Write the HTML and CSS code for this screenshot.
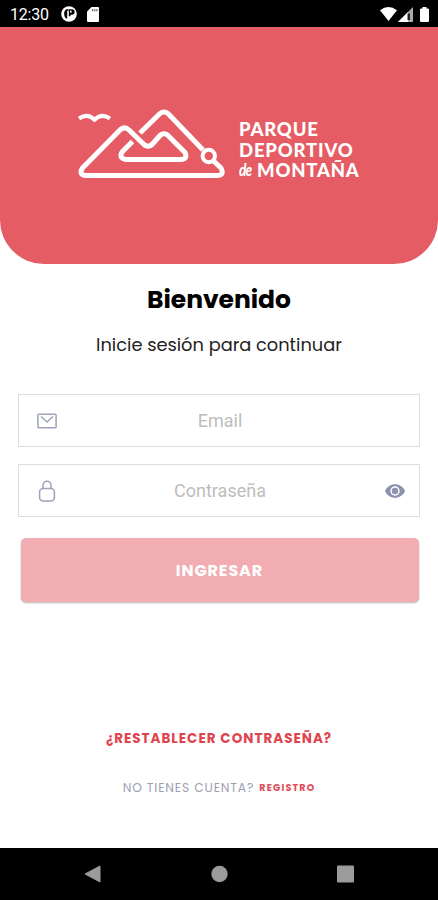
FILE: index.html
```html
<!DOCTYPE html>
<html lang="es">
<head>
    <meta charset="UTF-8">
    <meta name="viewport" content="width=device-width, initial-scale=1.0">
    <title>Parque Deportivo de Montaña</title>
    <link rel="stylesheet" href="styles.css">
</head>
<body>
    <div class="status-bar">
        <span class="clock">12:30</span>
        <svg class="status-app" width="16" height="16" viewBox="0 0 16 16">
            <circle cx="8" cy="8" r="7.8" fill="#fff"/>
            <path d="M7.500 3.200H5.600C3.600 4 3 6 3.200 8.500C3.500 11 4.500 12.500 6.200 12.800V4.800H7.500Z" fill="#000"/>
            <path d="M7.800 3.200h3a2.600 2.600 0 0 1 0 5.600H9.500v1.500H7.800z" fill="#000"/>
            <rect x="9" y="4.600" width="1.600" height="2" fill="#fff"/>
        </svg>
        <svg class="status-card" width="12" height="15" viewBox="0 0 12 15">
            <path d="M4.500 0H11a1 1 0 0 1 1 1v13a1 1 0 0 1-1 1H1a1 1 0 0 1-1-1V4.500z" fill="#fff"/>
            <path d="M5 2.200h1.200v2H5zM7.200 2.200h1.200v2H7.200zM9.300 2.200h1.200v2H9.300z" fill="#555"/>
        </svg>
        <div class="status-right">
            <svg width="17" height="14" viewBox="0 0 17 14">
                <path d="M0 3.200Q8.500-3 17 3.200L8.500 14z" fill="#fff"/>
            </svg>
            <svg width="15" height="15" viewBox="0 0 15 15">
                <path d="M0 15L15 0V15z" fill="#aaa"/>
                <path d="M0 15L10 5V15z" fill="#fff"/>
                <path d="M9.500 6.500h2.500V13H9.500z" fill="#222"/>
            </svg>
            <svg class="battery" width="9" height="15" viewBox="0 0 9 15">
                <path d="M2.500 0h4v1.500H8a1 1 0 0 1 1 1V14a1 1 0 0 1-1 1H1a1 1 0 0 1-1-1V2.500a1 1 0 0 1 1-1h1.500z" fill="#fff"/>
            </svg>
        </div>
    </div>

    <header class="header">
        <svg class="logo" width="160" height="90" viewBox="0 0 160 90" fill="none" stroke="#fff" stroke-width="5" stroke-linejoin="round">
            <path d="M70 33L90 13.500Q94 10.500 98 13.500L133 50"/>
            <path d="M142.500 60L151 68Q154.500 75 148 75.500H15Q8.500 74 12.500 68L50.500 29.500Q55 26 59 30L74 44.500Q78 48 82 44.500L90 35.500Q94 32 98 35.500L115 52.500Q118 59 111 59.500H56Q48 58 52.500 51.500L62.500 41.500"/>
            <circle cx="138.800" cy="56" r="6.200" stroke-width="4"/>
            <path d="M9 18.500Q18 12.500 24.500 20Q31 12.500 40 18.500" stroke-width="4"/>
        </svg>
        <div class="brand">
            <div class="brand-parque">PARQUE</div>
            <div class="brand-deportivo">DEPORTIVO</div>
            <div class="brand-last"><span class="brand-de">de</span><span class="brand-montana">MONTAÑA</span></div>
        </div>
    </header>

    <main class="content">
        <h1 class="title">Bienvenido</h1>
        <p class="subtitle">Inicie sesión para continuar</p>

        <form class="form">
            <div class="field">
                <svg width="20" height="22" viewBox="0 0 20 22" fill="none" stroke="#9da3ba" stroke-width="1.500">
                    <rect x="0.900" y="4.200" width="18.200" height="13.600" rx="1"/>
                    <path d="M4 6.500L10 12L16 6.500"/>
                </svg>
                <input type="email" class="input" placeholder="Email">
                <span class="spacer"></span>
            </div>
            <div class="field">
                <svg width="20" height="22" viewBox="0 0 20 22" fill="none" stroke="#9da3ba" stroke-width="1.500">
                    <rect x="2.600" y="8.600" width="14.800" height="12.300" rx="3.500"/>
                    <path d="M6 8.600V5.200a4 4 0 0 1 8 0V8.600"/>
                </svg>
                <input type="password" class="input" placeholder="Contraseña">
                <svg width="20" height="14" viewBox="0 0 20 14">
                    <path d="M0 7C3.500-2 16.500-2 20 7C16.500 16 3.500 16 0 7z" fill="#8b92ad"/>
                    <circle cx="10" cy="7" r="4.700" fill="#fff"/>
                    <circle cx="10" cy="7" r="3.200" fill="#8b92ad"/>
                </svg>
            </div>
            <button type="button" class="button">INGRESAR</button>
        </form>

        <a class="reset">¿RESTABLECER CONTRASEÑA?</a>
        <div class="register">
            <span class="question">NO TIENES CUENTA?</span>
            <a class="register-link">REGISTRO</a>
        </div>
    </main>

    <nav class="nav-bar">
        <svg width="17" height="18" viewBox="0 0 17 18"><path d="M1 9L16 1V17z" fill="#9b9b9b" stroke="#9b9b9b" stroke-linejoin="round"/></svg>
        <svg width="17" height="18" viewBox="0 0 17 18"><circle cx="8.500" cy="9" r="8.200" fill="#9b9b9b"/></svg>
        <svg width="17" height="18" viewBox="0 0 17 18"><rect y="0.500" width="17" height="17" rx="1" fill="#9b9b9b"/></svg>
    </nav>
</body>
</html>
```
FILE: styles.css
```css
* {
    box-sizing: border-box;
}
body {
    display: flex;
    flex-direction: column;
    height: 900px;
    margin: 0;
    background-color: #fff;
    font-family: Poppins, Inter, sans-serif;
    overflow: hidden;
}
svg {
    display: block;
    flex-shrink: 0;
}
.status-bar {
    display: flex;
    align-items: center;
    height: 27px;
    padding: 1px 9px 0 10px;
    background-color: #000;
    color: #fff;
}
.clock {
    width: 39px;
    font: 400 16px Roboto, sans-serif;
    letter-spacing: -0.2px;
    white-space: nowrap;
}
.status-app {
    margin-left: 12px;
}
.status-card {
    margin-left: 10px;
}
.status-right {
    display: flex;
    align-items: center;
    gap: 1px;
    margin-left: auto;
}
.battery {
    margin-left: 6px;
}
.header {
    display: flex;
    align-items: flex-start;
    height: 237px;
    padding: 73px 0 0 70px;
    background-color: #e55c64;
    border-radius: 0 0 44px 44px;
}
.brand {
    padding: 19px 0 0 9px;
    font-family: Lato, sans-serif;
    font-size: 18.5px;
    font-weight: 900;
    line-height: 20.5px;
    letter-spacing: 0.8px;
    color: #fff;
    white-space: nowrap;
}
.brand-last {
    display: flex;
}
.brand-de {
    width: 18px;
    font-size: 17px;
    font-style: italic;
    letter-spacing: -1px;
    transform: scaleX(0.8);
    transform-origin: left;
}
.content {
    display: flex;
    flex-direction: column;
    align-items: center;
    height: 584px;
    padding: 18px 18px 0;
}
.title {
    margin: 0;
    font-size: 25px;
    font-weight: 700;
    line-height: 36px;
    letter-spacing: -0.05px;
    color: #000;
}
.subtitle {
    margin: 14px 0 0;
    font-size: 17.8px;
    line-height: 26px;
    color: #222;
}
.form {
    width: 100%;
    margin-top: 36px;
}
.field {
    display: flex;
    align-items: center;
    height: 53px;
    margin-bottom: 17px;
    padding: 0 14px 0 18px;
    border: 1px solid #dcdde0;
}
.input {
    flex: 1;
    min-width: 0;
    padding: 0 2px 0 0;
    border: none;
    outline: none;
    background: none;
    font-family: Roboto, sans-serif;
    font-size: 18px;
    text-align: center;
}
.input::placeholder {
    color: #bdbdbd;
}
.spacer {
    width: 20px;
}
.button {
    display: block;
    width: 398px;
    height: 64px;
    margin: 21px 0 0 3px;
    padding: 0 1px 0 0;
    border: none;
    border-radius: 5px;
    background-color: #f2adb2;
    box-shadow: 0 1px 2px rgba(0, 0, 0, 0.3);
    font-family: inherit;
    font-size: 16px;
    font-weight: 700;
    letter-spacing: 0.9px;
    color: #fff;
}
.reset {
    margin-top: 127px;
    font-size: 13.5px;
    font-weight: 700;
    line-height: 20px;
    letter-spacing: 1px;
    color: #df444e;
}
.register {
    display: flex;
    align-items: center;
    gap: 5px;
    margin-top: 29px;
    line-height: 20px;
    white-space: nowrap;
}
.question {
    font-size: 12.3px;
    letter-spacing: 0.85px;
    color: #9ca1b2;
}
.register-link {
    font-size: 9.5px;
    font-weight: 700;
    letter-spacing: 1.2px;
    color: #e04e5a;
}
.nav-bar {
    display: flex;
    justify-content: space-between;
    height: 52px;
    padding: 17px 84px 0 84px;
    background-color: #000;
}
```
